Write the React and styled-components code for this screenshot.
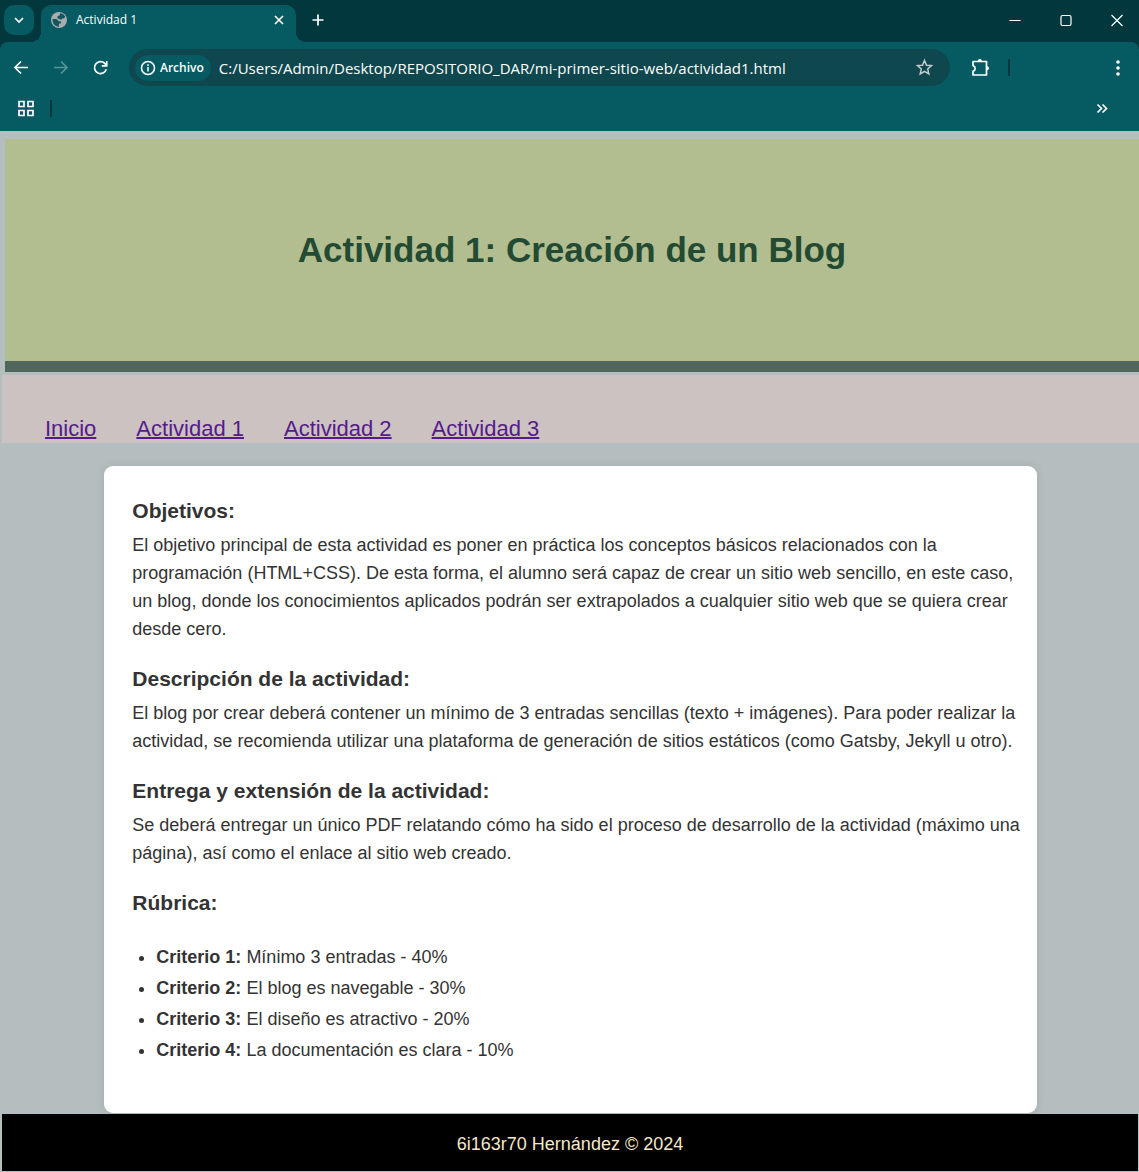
import React from "react";
import styled, { createGlobalStyle } from "styled-components";

const GlobalStyle = createGlobalStyle`
  *, *::before, *::after { box-sizing: border-box; }
  body { margin: 0; background: #b5bebf; font-family: "Liberation Sans", Arial, sans-serif; color: #333; }
`;

const Chrome = styled.header`
  background: #02373d;
  font-family: "Open Sans", "Noto Sans", sans-serif;
  color: #fff;
`;

const TabStrip = styled.div`
  display: flex;
  height: 42px;
  padding: 5px 0 0 4px;
`;

const IconButton = styled.button`
  display: grid;
  place-items: center;
  flex: none;
  width: ${(p) => p.$width || 40}px;
  height: ${(p) => p.$height || 30}px;
  padding: 0;
  border: 0;
  border-radius: 10px;
  background: ${(p) => p.$fill || "transparent"};
  color: ${(p) => p.$color || "#fff"};
  svg { display: block; }
`;

const Tab = styled.div`
  position: relative;
  display: flex;
  align-items: center;
  width: 255px;
  margin-left: 7px;
  padding: 0 4px 7px 9px;
  border-radius: 10px 10px 0 0;
  background: #055b61;
  font-size: 12px;
  line-height: 16px;
  &::before, &::after {
    content: "";
    position: absolute;
    bottom: 0;
    width: 10px;
    height: 10px;
  }
  &::before { right: 100%; background: radial-gradient(circle at 0 0, transparent 10px, #055b61 10px); }
  &::after { left: 100%; background: radial-gradient(circle at 100% 0, transparent 10px, #055b61 10px); }
`;

const TabTitle = styled.span`
  flex: 1;
  margin-left: 8px;
`;

const WindowControls = styled.div`
  display: flex;
  margin-left: auto;
`;

const Bars = styled.div`
  background: #055b61;
  border-radius: 8px 8px 0 0;
`;

const Toolbar = styled.div`
  display: flex;
  align-items: center;
  padding: 7px 1px 0;
`;

const Omnibox = styled.form`
  display: flex;
  flex: 1;
  align-items: center;
  height: 37px;
  margin: 0 10px 0 8px;
  padding: 0 5px 0 6px;
  border-radius: 19px;
  background: #0e474d;
`;

const SchemeChip = styled.button`
  display: flex;
  align-items: center;
  gap: 4px;
  height: 26px;
  padding: 0 7px 0 5px;
  border: 0;
  border-radius: 13px;
  background: #055b61;
  color: #fff;
  font: 600 12px/16px "Open Sans", "Noto Sans", sans-serif;
`;

const Address = styled.input`
  flex: 1;
  min-width: 0;
  margin-left: 8px;
  padding: 0;
  border: 0;
  outline: 0;
  background: transparent;
  color: #fff;
  font: 400 15px/20px "Open Sans", "Noto Sans", sans-serif;
`;

const Divider = styled.span`
  flex: none;
  width: 2px;
  height: 17px;
  margin: ${(p) => p.$margin || "0"};
  background: #02373d;
`;

const Bookmarks = styled.nav`
  display: flex;
  align-items: center;
  height: 45px;
  padding: 0 17px 0 6px;
`;

const Page = styled.div`
  padding: 8px 0 1px 2px;
`;

const Banner = styled.header`
  display: grid;
  place-items: center;
  height: 233px;
  margin: 0 0 3px 3px;
  border-bottom: 11px solid #50665c;
  background: #b2be8f;
`;

const Title = styled.h1`
  margin: 0;
  color: #234a32;
  font-size: 35px;
  line-height: 40px;
`;

const SiteNav = styled.nav`
  display: flex;
  align-items: flex-end;
  gap: 40px;
  height: 68px;
  padding-left: 43px;
  background: #ccc2c1;
`;

const NavLink = styled.a`
  color: #551a8b;
  font-size: 22px;
  line-height: 28px;
  text-decoration: underline;
  text-decoration-thickness: 2px;
`;

const Card = styled.main`
  width: 82%;
  margin: 23px auto 1px;
  padding: 33px 12px 49px 28px;
  border-radius: 9px;
  background: #fff;
  box-shadow: 0 0 10px rgba(0, 0, 0, 0.1);
`;

const Section = styled.section`
  & + & { margin-top: 24px; }
`;

const Heading = styled.h2`
  margin: 0 0 8px;
  font-size: 21px;
  line-height: 24px;
`;

const Text = styled.p`
  margin: 0;
  font-size: 18px;
  line-height: 28px;
`;

const Criteria = styled.ul`
  display: grid;
  gap: 3px;
  margin: 28px 0 0;
  padding-left: 24px;
  font-size: 18px;
  line-height: 28px;
`;

const Footer = styled.footer`
  margin-right: 1px;
  padding: 16px 16px 13px;
  background: #000;
  color: #f7e8c8;
  font-size: 18px;
  line-height: 28px;
  text-align: center;
`;

const Icon = ({ size = 20, box = 20, width = 1.7, children }) => (
  <svg width={size} height={size} viewBox={`0 0 ${box} ${box}`} fill="none" stroke="currentColor" strokeWidth={width} aria-hidden="true">
    {children}
  </svg>
);

const links = ["Inicio", "Actividad 1", "Actividad 2", "Actividad 3"];

const sections = [
  ["Objetivos:", "El objetivo principal de esta actividad es poner en práctica los conceptos básicos relacionados con la programación (HTML+CSS). De esta forma, el alumno será capaz de crear un sitio web sencillo, en este caso, un blog, donde los conocimientos aplicados podrán ser extrapolados a cualquier sitio web que se quiera crear desde cero."],
  ["Descripción de la actividad:", "El blog por crear deberá contener un mínimo de 3 entradas sencillas (texto + imágenes). Para poder realizar la actividad, se recomienda utilizar una plataforma de generación de sitios estáticos (como Gatsby, Jekyll u otro)."],
  ["Entrega y extensión de la actividad:", "Se deberá entregar un único PDF relatando cómo ha sido el proceso de desarrollo de la actividad (máximo una página), así como el enlace al sitio web creado."],
];

const criteria = [
  "Mínimo 3 entradas - 40%",
  "El blog es navegable - 30%",
  "El diseño es atractivo - 20%",
  "La documentación es clara - 10%",
];

function Browser() {
  return (
    <Chrome>
      <TabStrip>
        <IconButton $width={30} $fill="#055b61" aria-label="Buscar pestañas">
          <Icon><path d="M6 8l4 4 4-4" /></Icon>
        </IconButton>
        <Tab>
          <svg width="18" height="18" viewBox="0 0 18 18" aria-hidden="true">
            <circle cx="9" cy="9" r="8" fill="#a9adb0" />
            <path d="M2.600 8.200C2.800 7.900 4 7.900 5.500 8c1.800.1 2.700.9 2.800 2.300h1.900c1.300.1 1.300 2.200 0 2.300H8.900v3.100C5 15.600 2.300 12.300 2.600 8.200zM10.300 2.300c2.200.3 3.800 1.400 4.800 3.200-.3 1.700-1.400 2.200-2.600 1.700-.3 1.200-1.100 1.500-2.200 1.200L7.600 7.300c-.6-1.600.1-2.700 1.900-2.700z" fill="#12555c" />
          </svg>
          <TabTitle>Actividad 1</TabTitle>
          <IconButton $width={26} $height={26} aria-label="Cerrar pestaña">
            <Icon><path d="M6 6l8 8M14 6l-8 8" /></Icon>
          </IconButton>
        </Tab>
        <IconButton $width={44} aria-label="Nueva pestaña">
          <Icon><path d="M10 4.500v11M4.500 10h11" /></Icon>
        </IconButton>
        <WindowControls>
          <IconButton $width={51} aria-label="Minimizar">
            <Icon width={1}><path d="M4.500 10.500h11" /></Icon>
          </IconButton>
          <IconButton $width={51} aria-label="Maximizar">
            <Icon width={1.2}><rect x="5" y="5.500" width="10" height="10" rx="1.500" /></Icon>
          </IconButton>
          <IconButton $width={48} aria-label="Cerrar">
            <Icon width={1.2}><path d="M6.500 5l11 11M17.500 5l-11 11" /></Icon>
          </IconButton>
        </WindowControls>
      </TabStrip>
      <Bars>
        <Toolbar>
          <IconButton aria-label="Atrás">
            <Icon><path d="M17 9.500H4.500M10 3.500l-6 6 6 6" /></Icon>
          </IconButton>
          <IconButton $color="#5b959b" aria-label="Adelante">
            <Icon><path d="M3 9.500h12.500M10 3.500l6 6-6 6" /></Icon>
          </IconButton>
          <IconButton aria-label="Recargar">
            <Icon><path d="M15.300 11.200A6 6 0 1 1 13.700 5.300L15.300 7M15.700 3v4.800h-4.900" /></Icon>
          </IconButton>
          <Omnibox>
            <SchemeChip type="button">
              <Icon size={16} box={16}>
                <circle cx="8" cy="8" r="6.500" strokeWidth="1.500" />
                <path d="M8 7v4.500M8 4.300v1.600" strokeWidth="1.500" />
              </Icon>
              Archivo
            </SchemeChip>
            <Address aria-label="Dirección" defaultValue="C:/Users/Admin/Desktop/REPOSITORIO_DAR/mi-primer-sitio-web/actividad1.html" />
            <IconButton type="button" $color="#c3cdd0" aria-label="Añadir a marcadores">
              <Icon width={1.5}><path d="M9.500 2.500l2 4.700 5 .4-3.800 3.400 1.100 4.900-4.300-2.600-4.300 2.600L6.300 11 2.500 7.600l5-.4z" /></Icon>
            </IconButton>
          </Omnibox>
          <IconButton aria-label="Extensiones">
            <Icon>
              <path d="M3 3.500h13.500v13.500H3v-3.700c2.900-1.300 2.900-4.500 0-5.800z" strokeLinejoin="round" />
              <path d="M7.800 3a2 2 0 0 1 4 0zM17 8.200a2 2 0 0 1 0 4z" fill="currentColor" stroke="none" />
            </Icon>
          </IconButton>
          <Divider $margin="0 88px 0 8px" />
          <IconButton aria-label="Menú">
            <Icon><g fill="currentColor" stroke="none"><circle cx="10" cy="4" r="1.800" /><circle cx="10" cy="10" r="1.800" /><circle cx="10" cy="16" r="1.800" /></g></Icon>
          </IconButton>
        </Toolbar>
        <Bookmarks>
          <IconButton aria-label="Aplicaciones">
            <Icon><path d="M3 2.500h5v5H3zM12 2.500h5v5h-5zM3 11.500h5v5H3zM12 11.500h5v5h-5z" /></Icon>
          </IconButton>
          <Divider $margin="0 auto 0 4px" />
          <IconButton aria-label="Más marcadores">
            <Icon><path d="M5.500 5.500l4 4-4 4M10.500 5.500l4 4-4 4" /></Icon>
          </IconButton>
        </Bookmarks>
      </Bars>
    </Chrome>
  );
}

export default function App() {
  return (
    <>
      <GlobalStyle />
      <Browser />
      <Page>
        <Banner><Title>Actividad 1: Creación de un Blog</Title></Banner>
        <SiteNav>
          {links.map((name) => <NavLink key={name} href="#">{name}</NavLink>)}
        </SiteNav>
        <Card>
          {sections.map(([title, body]) => (
            <Section key={title}>
              <Heading>{title}</Heading>
              <Text>{body}</Text>
            </Section>
          ))}
          <Section>
            <Heading>Rúbrica:</Heading>
            <Criteria>
              {criteria.map((item, i) => (
                <li key={item}><strong>Criterio {i + 1}:</strong> {item}</li>
              ))}
            </Criteria>
          </Section>
        </Card>
        <Footer>6i163r70 Hernández © 2024</Footer>
      </Page>
    </>
  );
}
